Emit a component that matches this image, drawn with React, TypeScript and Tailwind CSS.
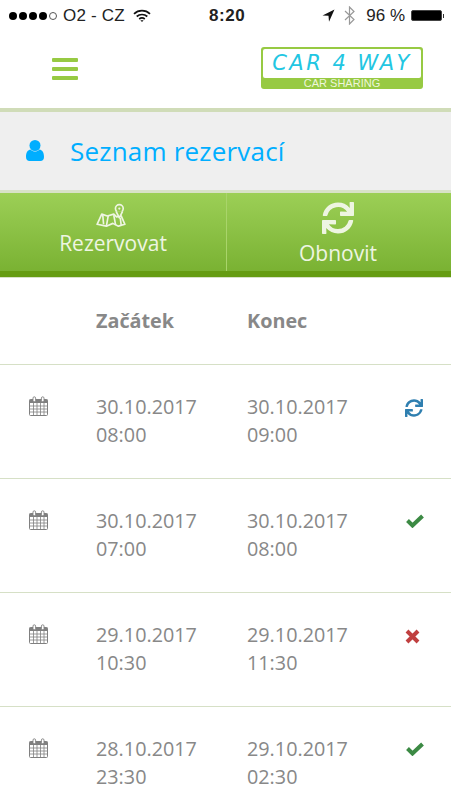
import { FaSync } from 'react-icons/fa';

const rows = [
  { start: ['30.10.2017', '08:00'], end: ['30.10.2017', '09:00'], status: 'sync' },
  { start: ['30.10.2017', '07:00'], end: ['30.10.2017', '08:00'], status: 'ok' },
  { start: ['29.10.2017', '10:30'], end: ['29.10.2017', '11:30'], status: 'no' },
  { start: ['28.10.2017', '23:30'], end: ['29.10.2017', '02:30'], status: 'ok' },
];

function CalendarIcon() {
  return (
    <svg width="19" height="20" viewBox="0 0 19 20" className="text-[#808080]">
      <rect x="0.5" y="3.5" width="18" height="16" rx="1" fill="none" stroke="currentColor" />
      <rect x="0.5" y="3.5" width="18" height="3.5" fill="currentColor" />
      <path d="M1 10h17M1 13h17M1 16h17M4.5 7v12M8 7v12M11.5 7v12M15 7v12" stroke="currentColor" strokeWidth="0.8" />
      <rect x="4" y="0.8" width="2.6" height="5" rx="1.3" fill="#fff" stroke="currentColor" strokeWidth="0.9" />
      <rect x="12.4" y="0.8" width="2.6" height="5" rx="1.3" fill="#fff" stroke="currentColor" strokeWidth="0.9" />
    </svg>
  );
}

function MapPinIcon() {
  return (
    <svg width="30" height="25" viewBox="0 0 32 27" fill="none" stroke="#eef5e2" strokeWidth="1.8" strokeLinejoin="round">
      <path d="M1 23l5-11 6 2 7-2 3 3 5-1 4 9-7 2-6-3-7 3-10-2z" />
      <path d="M7 12l1 11M13 14l-2 11M19 13l2 11M26 16l1 8" />
      <circle cx="25" cy="6" r="4.2" fill="#94c84e" />
      <circle cx="25" cy="6" r="1.2" fill="#eef5e2" stroke="none" />
      <path d="M21.500 9l3.500 7 3.500-7" fill="#94c84e" />
    </svg>
  );
}

function StatusIcon({ status }: { status: string }) {
  if (status === 'sync') return <FaSync className="ml-[1px] text-[18px] text-[#2f7fb0]" />;
  if (status === 'ok') {
    return (
      <svg width="18" height="14" viewBox="0 0 18 14" className="mt-[1px] ml-[2px]" fill="none" stroke="#3c8a44" strokeWidth="4">
        <path d="M1.500 6.500l5 5L16.500 2" />
      </svg>
    );
  }
  return (
    <svg width="15" height="15" viewBox="0 0 15 15" className="mt-[2px] ml-[1px]" fill="none" stroke="#c04040" strokeWidth="4">
      <path d="M2 2l11 11M13 2L2 13" />
    </svg>
  );
}

function StatusBar() {
  return (
    <div className="flex h-[27px] items-center pl-[9px] pr-[7px] pt-[4px] font-['Liberation_Sans',sans-serif] text-[17px] text-[#222]">
      <div className="flex w-[181px] items-center">
        <div className="flex gap-[2px]">
          <span className="h-[8px] w-[8px] rounded-full bg-black" />
          <span className="h-[8px] w-[8px] rounded-full bg-black" />
          <span className="h-[8px] w-[8px] rounded-full bg-black" />
          <span className="h-[8px] w-[8px] rounded-full bg-black" />
          <span className="h-[8px] w-[8px] rounded-full border border-[#555]" />
        </div>
        <span className="ml-[6px] tracking-[0.2px]">O2 - CZ</span>
        <svg width="18" height="14" viewBox="0 0 18 14" className="ml-[8px]" fill="none" stroke="#111" strokeWidth="1.7">
          <path d="M1 4.800c4.500-4.200 11.500-4.200 16 0M3.700 7.500c3-2.700 7.600-2.700 10.600 0M6.200 10c1.600-1.300 4-1.300 5.600 0" />
          <path d="M7.400 11.200L9 13l1.600-1.800z" fill="#111" stroke="none" />
        </svg>
      </div>
      <span className="ml-[19px] text-[17px] font-bold tracking-[0.6px]">8:20</span>
      <div className="ml-auto flex items-center">
        <svg width="13" height="13" viewBox="0 0 13 13"><path d="M12.500 0.500L0.500 6.500l6 .2.500 6z" fill="#111" /></svg>
        <svg width="11" height="19" viewBox="0 0 11 19" className="ml-[9px]" fill="none" stroke="#999" strokeWidth="1.200">
          <path d="M1 5l9 8.500-4.500 4.500V1L10 5.500 1 14" />
        </svg>
        <span className="ml-[11px]">96 %</span>
        <div className="ml-[6px] h-[11px] w-[31px] rounded-[2px] border border-[#444] bg-black" />
        <div className="ml-[1px] h-[4px] w-[1px] bg-[#333]" />
      </div>
    </div>
  );
}

function Logo() {
  return (
    <div className="flex h-[42px] w-[162px] flex-col overflow-hidden rounded-[3px] bg-[#97ca43] px-[2px] pt-[2px]">
      <div className="flex h-[29px] items-center justify-center whitespace-nowrap rounded-[2px] bg-white font-['DejaVu_Sans',sans-serif] text-[21px] italic leading-none tracking-[2.5px] text-[#22c6e2]">
        CAR 4 WAY
      </div>
      <div className="flex flex-1 items-center justify-center font-['Liberation_Sans',sans-serif] text-[11px] leading-none text-[#eef6dc]">
        CAR SHARING
      </div>
    </div>
  );
}

export default function App() {
  return (
    <div className="h-[800px] w-[451px] overflow-hidden bg-white font-['Open_Sans',sans-serif]">
      <StatusBar />

      {/* header */}
      <div className="flex h-[85px] items-start border-b-[4px] border-[#d0dcb8] pl-[52px] pr-[28px]">
        <div className="mt-[31px] flex w-[26px] flex-col gap-[5px]">
          <span className="h-[4px] rounded-[1px] bg-[#97ca43]" />
          <span className="h-[4px] rounded-[1px] bg-[#97ca43]" />
          <span className="h-[4px] rounded-[1px] bg-[#97ca43]" />
        </div>
        <div className="ml-auto mt-[20px]">
          <Logo />
        </div>
      </div>

      {/* title */}
      <div className="flex h-[81px] items-center border-b-[3px] border-[#d8e2c8] bg-[#efefef] pb-[1px] pl-[26px]">
        <svg width="18" height="21" viewBox="0 0 18 21" fill="#00aeff">
          <circle cx="9" cy="5.500" r="5.500" />
          <path d="M0 17c0-5 2-7 4.500-7.500C6 11 7.500 11.600 9 11.600s3-.6 4.500-2.100C16 10 18 12 18 17c0 2.500-1.500 4-3.500 4h-11C1.500 21 0 19.500 0 17z" />
        </svg>
        <h1 className="ml-[26px] text-[26px] font-medium leading-none tracking-[0.2px] text-[#00aeff]">Seznam rezervací</h1>
      </div>

      {/* actions */}
      <div className="flex h-[85px] border-b border-[#d8e2c8]">
        <div className="flex w-full border-b-[6px] border-[#659c12] bg-gradient-to-b from-[#9ccf56] to-[#7ab232] text-[#eef5e2]">
          <button className="flex w-[227px] flex-col items-center border-r border-[#a9d46a] pt-[10px]">
            <span className="ml-[-5px] flex">
              <MapPinIcon />
            </span>
            <span className="mt-[2px] text-[21px] leading-[27px]">Rezervovat</span>
          </button>
          <button className="flex flex-1 flex-col items-center pr-[2px] pt-[9px]">
            <FaSync className="text-[32px]" />
            <span className="mt-[6px] text-[21px] leading-[27px]">Obnovit</span>
          </button>
        </div>
      </div>

      {/* table */}
      <div className="flex h-[87px] items-center border-b border-[#d6e0c6] pb-[1px] text-[19.8px] font-bold text-[#888]">
        <span className="ml-[96px] w-[151px]">Začátek</span>
        <span>Konec</span>
      </div>
      {rows.map((row, i) => (
        <div key={i} className="flex h-[114px] border-b border-[#d6e0c6] pt-[28px] text-[19.8px] leading-[28px] text-[#888]">
          <div className="ml-[29px] w-[67px] pt-[3px]">
            <CalendarIcon />
          </div>
          <div className="w-[151px]">
            <div>{row.start[0]}</div>
            <div>{row.start[1]}</div>
          </div>
          <div className="w-[157px]">
            <div>{row.end[0]}</div>
            <div>{row.end[1]}</div>
          </div>
          <div className="pt-[6px]">
            <StatusIcon status={row.status} />
          </div>
        </div>
      ))}
    </div>
  );
}
